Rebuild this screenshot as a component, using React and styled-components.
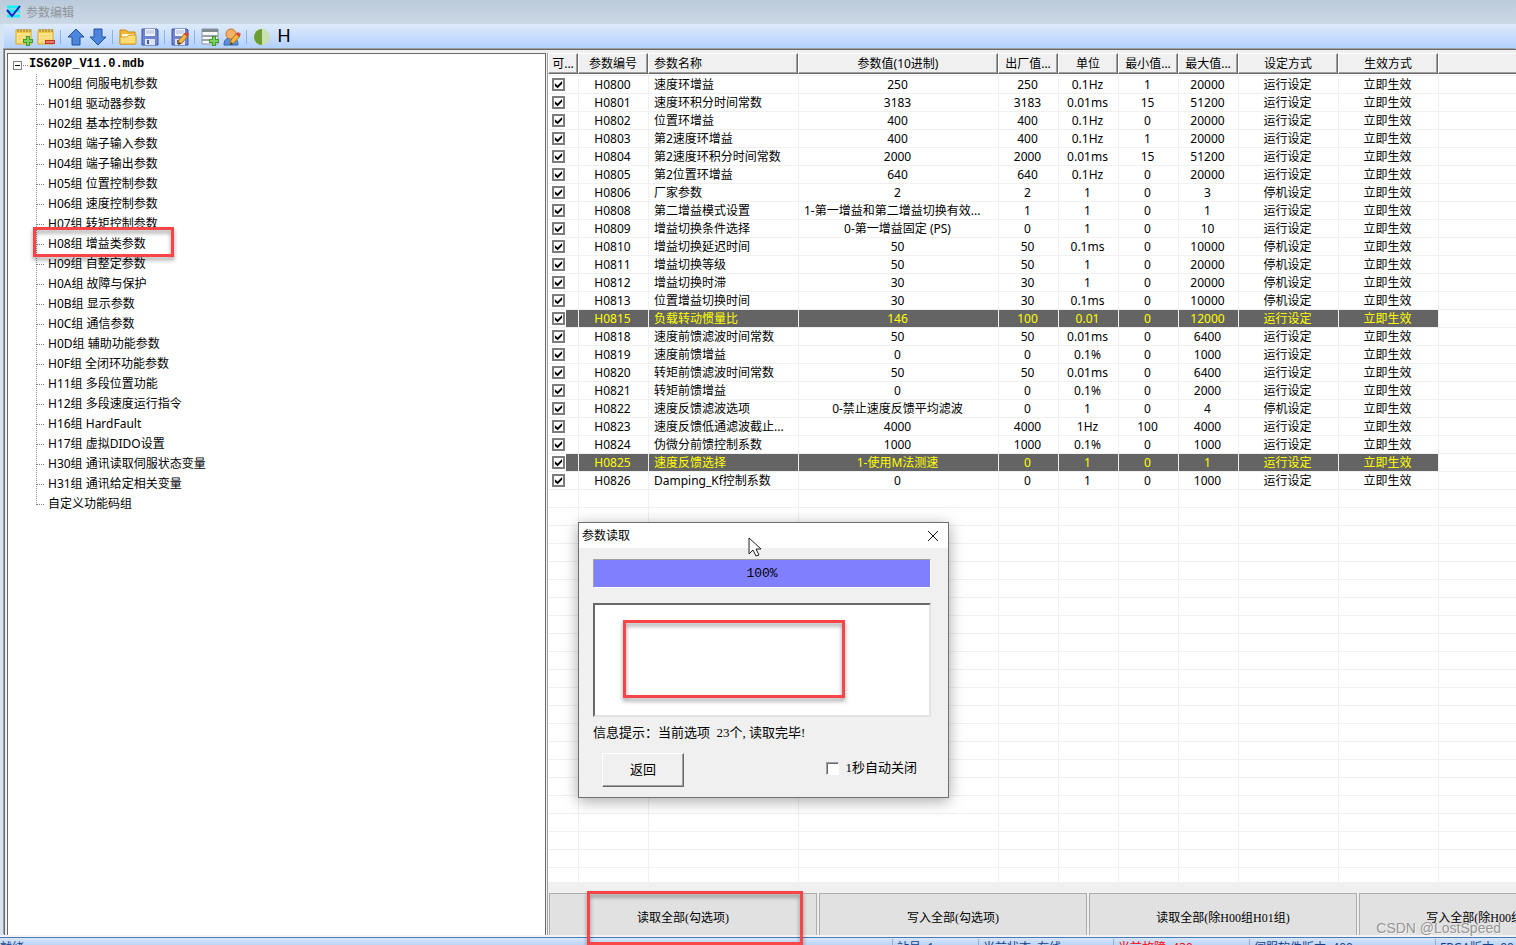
import React, { useState } from 'react'
import styled, { createGlobalStyle } from 'styled-components'

const groups = [
  'H00组 伺服电机参数',
  'H01组 驱动器参数',
  'H02组 基本控制参数',
  'H03组 端子输入参数',
  'H04组 端子输出参数',
  'H05组 位置控制参数',
  'H06组 速度控制参数',
  'H07组 转矩控制参数',
  'H08组 增益类参数',
  'H09组 自整定参数',
  'H0A组 故障与保护',
  'H0B组 显示参数',
  'H0C组 通信参数',
  'H0D组 辅助功能参数',
  'H0F组 全闭环功能参数',
  'H11组 多段位置功能',
  'H12组 多段速度运行指令',
  'H16组 HardFault',
  'H17组 虚拟DIDO设置',
  'H30组 通讯读取伺服状态变量',
  'H31组 通讯给定相关变量',
  '自定义功能码组',
]

const columns = [
  { title: '可...', width: 30 },
  { title: '参数编号', width: 70 },
  { title: '参数名称', width: 150, left: true },
  { title: '参数值(10进制)', width: 200 },
  { title: '出厂值...', width: 60 },
  { title: '单位', width: 60 },
  { title: '最小值...', width: 60 },
  { title: '最大值...', width: 60 },
  { title: '设定方式', width: 100 },
  { title: '生效方式', width: 100 },
  { title: '' },
]

const RUN = '运行设定'
const STOP = '停机设定'

const params = [
  ['H0800', '速度环增益', '250', '250', '0.1Hz', '1', '20000', RUN],
  ['H0801', '速度环积分时间常数', '3183', '3183', '0.01ms', '15', '51200', RUN],
  ['H0802', '位置环增益', '400', '400', '0.1Hz', '0', '20000', RUN],
  ['H0803', '第2速度环增益', '400', '400', '0.1Hz', '1', '20000', RUN],
  ['H0804', '第2速度环积分时间常数', '2000', '2000', '0.01ms', '15', '51200', RUN],
  ['H0805', '第2位置环增益', '640', '640', '0.1Hz', '0', '20000', RUN],
  ['H0806', '厂家参数', '2', '2', '1', '0', '3', STOP],
  ['H0808', '第二增益模式设置', '1-第一增益和第二增益切换有效...', '1', '1', '0', '1', RUN],
  ['H0809', '增益切换条件选择', '0-第一增益固定 (PS)', '0', '1', '0', '10', RUN],
  ['H0810', '增益切换延迟时间', '50', '50', '0.1ms', '0', '10000', STOP],
  ['H0811', '增益切换等级', '50', '50', '1', '0', '20000', STOP],
  ['H0812', '增益切换时滞', '30', '30', '1', '0', '20000', STOP],
  ['H0813', '位置增益切换时间', '30', '30', '0.1ms', '0', '10000', STOP],
  ['H0815', '负载转动惯量比', '146', '100', '0.01', '0', '12000', RUN],
  ['H0818', '速度前馈滤波时间常数', '50', '50', '0.01ms', '0', '6400', RUN],
  ['H0819', '速度前馈增益', '0', '0', '0.1%', '0', '1000', RUN],
  ['H0820', '转矩前馈滤波时间常数', '50', '50', '0.01ms', '0', '6400', RUN],
  ['H0821', '转矩前馈增益', '0', '0', '0.1%', '0', '2000', RUN],
  ['H0822', '速度反馈滤波选项', '0-禁止速度反馈平均滤波', '0', '1', '0', '4', STOP],
  ['H0823', '速度反馈低通滤波截止...', '4000', '4000', '1Hz', '100', '4000', RUN],
  ['H0824', '伪微分前馈控制系数', '1000', '1000', '0.1%', '0', '1000', RUN],
  ['H0825', '速度反馈选择', '1-使用M法测速', '0', '1', '0', '1', RUN],
  ['H0826', 'Damping_Kf控制系数', '0', '0', '1', '0', '1000', RUN],
]

const changed = ['H0815', 'H0825']
const blankRows = Array.from({ length: 22 })

const actions = ['读取全部(勾选项)', '写入全部(勾选项)', '读取全部(除H00组H01组)', '写入全部(除H00组H01组)']

const NotePad = () => (
  <>
    <rect x="1" y="2" width="15" height="14" fill="#fbe48a" stroke="#d9a520" />
    <path d="M1 2h15v3H1z" fill="#f3c844" />
    <path d="M3 1v3M6 1v3M9 1v3M12 1v3M15 1v3" stroke="#8a7440" />
    <path d="M3 8h11M3 11h11M3 14h7" stroke="#f0cf62" />
  </>
)

const Disk = () => (
  <>
    <path d="M1 1h15l1 1v15H1z" fill="#6f83cf" stroke="#4355a4" />
    <path d="M4 1h10v7H4z" fill="#eef3fc" />
    <path d="M5 3h8M5 5h8" stroke="#a9b7dd" />
    <path d="M4 11h10v6H4z" fill="#dce3f4" />
    <path d="M6 12h2v4H6z" fill="#4a5ca8" />
  </>
)

const Pencil = () => (
  <>
    <path d="M7 16l1-4 6-7 3 3-6 7z" fill="#f4b73c" stroke="#a8701c" />
    <path d="M13 6l2-2 3 2-2 3z" fill="#d9463c" />
    <path d="M7 17l1-3 2 2z" fill="#433a2c" />
  </>
)

const tools = [
  {
    name: '新建',
    art: <><NotePad /><path d="M13 8v10M8 13h10" stroke="#3f9b2f" strokeWidth="4" /><path d="M13 9v8M9 13h8" stroke="#7bd35d" strokeWidth="2" /></>,
  },
  {
    name: '删除',
    art: <><NotePad /><path d="M8 14h10" stroke="#b93a2c" strokeWidth="4" /><path d="M9 14h8" stroke="#ee7a66" strokeWidth="2" /></>,
    split: true,
  },
  { name: '上移', art: <path d="M9 1l8 8h-4v8H5V9H1z" fill="#4b86dc" stroke="#2450a0" /> },
  { name: '下移', art: <path d="M9 17l8-8h-4V1H5v8H1z" fill="#4b86dc" stroke="#2450a0" />, split: true },
  {
    name: '打开',
    art: <><path d="M1 16V2h6l2 2h7v12z" fill="#f2b632" stroke="#c98b14" /><path d="M3 6h12v4H3z" fill="#fff9e0" /><path d="M1 16V9h7l2-2h7v9z" fill="#fddc72" stroke="#d79c20" /></>,
  },
  { name: '保存', art: <Disk />, split: true },
  { name: '另存为', art: <><Disk /><Pencil /></>, split: true },
  {
    name: '添加表',
    art: <><path d="M1 1h16v15H1z" fill="#f5f7f8" stroke="#8d979b" /><path d="M1 1h16v3H1z" fill="#7f8b90" /><path d="M1 8h16M1 12h16" stroke="#9aa4a8" strokeWidth="2" /><path d="M13 8v10M8 13h10" stroke="#3f9b2f" strokeWidth="4" /><path d="M13 9v8M9 13h8" stroke="#7bd35d" strokeWidth="2" /></>,
  },
  {
    name: '用户',
    art: <><path d="M1 17c0-5 2-7 7-7s7 2 7 7z" fill="#5c8fdc" stroke="#3264b0" /><circle cx="8" cy="6" r="5" fill="#f5b06a" stroke="#c87527" /><Pencil /></>,
    split: true,
  },
  {
    name: '对比度',
    art: <><circle cx="9" cy="9" r="8" fill="#c9dfb0" /><path d="M9 1a8 8 0 0 0 0 16z" fill="#6d9c30" /></>,
  },
]

function App() {
  const [autoClose, setAutoClose] = useState(false)
  return (
    <Window>
      <GlobalStyle />
      <TitleBar>
        <svg width="16" height="14" viewBox="0 0 16 14">
          <path d="M1 2h13M1 6h13M1 11h13" stroke="#19f0f5" strokeWidth="3" />
          <path d="M1 5l5 6L14 1" fill="none" stroke="#1022c8" strokeWidth="2" />
        </svg>
        参数编辑
      </TitleBar>
      <ToolBar>
        {tools.map(tool => (
          <React.Fragment key={tool.name}>
            <ToolButton aria-label={tool.name}>
              <svg width="18" height="18" viewBox="0 0 18 18">{tool.art}</svg>
            </ToolButton>
            {tool.split && <Separator />}
          </React.Fragment>
        ))}
        <ToolButton>H</ToolButton>
      </ToolBar>

      <Main>
        <Tree>
          <Root>
            <Expander aria-label="折叠" />
            <Stub />
            IS620P_V11.0.mdb
          </Root>
          <Branches>
            {groups.map(group => (
              <Branch key={group}>
                {group}
                {group.startsWith('H08') && <TreeMark />}
              </Branch>
            ))}
          </Branches>
        </Tree>

        <Content>
          <Grid>
            <Table>
              <colgroup>
                {columns.map((col, i) => <Col key={i} $width={col.width} />)}
              </colgroup>
              <thead>
                <tr>
                  {columns.map((col, i) => (
                    <Head key={i}><HeadLabel $left={col.left}>{col.title}</HeadLabel></Head>
                  ))}
                </tr>
              </thead>
              <tbody>
                {params.map(row => (
                  <Row key={row[0]} $changed={changed.includes(row[0])}>
                    <CheckCell $changed={changed.includes(row[0])}>
                      <RowCheck type="checkbox" defaultChecked aria-label={row[0]} />
                    </CheckCell>
                    {row.map((text, i) => (
                      <Cell key={i} $left={i === 1 || text.endsWith('...')}>{text}</Cell>
                    ))}
                    <Cell>立即生效</Cell>
                    <LastCell />
                  </Row>
                ))}
                {blankRows.map((_, i) => (
                  <Row key={i}>
                    {columns.map((col, c) => <Cell key={c} $first={c === 0} />)}
                  </Row>
                ))}
              </tbody>
            </Table>
          </Grid>
          <Actions>
            {actions.map(action => <ActionButton key={action}>{action}</ActionButton>)}
          </Actions>

          <Dialog role="dialog" aria-labelledby="dialog-title">
            <DialogTitle>
              <span id="dialog-title">参数读取</span>
              <CloseButton aria-label="关闭">
                <svg width="12" height="12" viewBox="0 0 12 12">
                  <path d="M1 1l10 10M11 1L1 11" stroke="#111" fill="none" />
                </svg>
              </CloseButton>
            </DialogTitle>
            <DialogBody>
              <Progress>100%</Progress>
              <Log><LogMark /></Log>
              <Info>信息提示：当前选项&nbsp; 23个, 读取完毕!</Info>
              <DialogFooter>
                <BackButton>返回</BackButton>
                <AutoClose>
                  <CloseCheck type="checkbox" checked={autoClose} onChange={e => setAutoClose(e.target.checked)} />
                  1秒自动关闭
                </AutoClose>
              </DialogFooter>
            </DialogBody>
            <Pointer width="14" height="20" viewBox="0 0 14 20">
              <path d="M1 1v16l4-4 3 6 3-1-3-6h5z" fill="#fff" stroke="#1c1c28" />
            </Pointer>
          </Dialog>
        </Content>
      </Main>

      <StatusBar>
        <Status>就绪</Status>
        <Status $width={86}>站号: 1</Status>
        <Status $width={135}>当前状态: 在线</Status>
        <Status $width={136} $alarm>当前故障: 430</Status>
        <Status $width={186}>伺服软件版本: 400</Status>
        <Status $width={81}>FPGA版本: 00.0</Status>
      </StatusBar>
      <ActionMark />
      <Watermark>CSDN @LostSpeed</Watermark>
    </Window>
  )
}

export default App

const GlobalStyle = createGlobalStyle`
  * {
    box-sizing: border-box;
  }

  body {
    margin: 0;
    font-family: "Noto Sans", "Noto Sans CJK SC", sans-serif;
    font-size: 12px;
    color: #000;
  }

  button {
    padding: 0;
    border: 0;
    background: none;
    color: inherit;
    font: inherit;
  }
`

const serif = '"Liberation Serif", "Noto Sans CJK SC", serif'

const Window = styled.div`
  position: relative;
  display: flex;
  flex-direction: column;
  height: 100vh;
  overflow: hidden;
  background: #d6e3f2;
`

const TitleBar = styled.header`
  display: flex;
  align-items: center;
  gap: 4px;
  flex: none;
  height: 24px;
  padding-left: 6px;
  background: linear-gradient(#bccbdb, #cbd8e6);
  color: #8f959c;
`

const ToolBar = styled.div`
  display: flex;
  align-items: center;
  flex: none;
  height: 25px;
  margin-left: 4px;
  padding-left: 9px;
  background: linear-gradient(#dfebfb, #b0d0ff);
`

const ToolButton = styled.button`
  display: flex;
  align-items: center;
  justify-content: center;
  width: 22px;
  height: 22px;
  font: 18px "Liberation Sans", sans-serif;
`

const Separator = styled.span`
  width: 1px;
  height: 14px;
  margin: 0 4px 0 3px;
  background: #8fb0e0;
`

const Main = styled.main`
  display: flex;
  flex: 1;
  min-height: 0;
  margin-left: 4px;
  padding: 3px 0 0 2px;
  border: solid #696969;
  border-width: 1px 0 0 1px;
  box-shadow: -1px -1px #a0a0a0;
  background: #f0f0f0;
`

const Tree = styled.nav`
  flex: none;
  width: 539px;
  margin-right: 1px;
  border: 1px solid #696969;
  border-bottom: 0;
  background: #fff;
`

const Root = styled.div`
  display: flex;
  align-items: center;
  height: 19px;
  padding-left: 5px;
  font: bold 12px "Liberation Mono", monospace;
  white-space: nowrap;
`

const Expander = styled.button`
  width: 9px;
  height: 9px;
  margin-top: 4px;
  border: 1px solid #808080;
  background: linear-gradient(#000, #000) center / 5px 1px no-repeat #fff;
`

const Stub = styled.span`
  width: 5px;
  margin: 4px 1px 0;
  border-top: 1px dotted #808080;
`

const Branches = styled.ul`
  margin: 1px 0 0 28px;
  padding: 0;
  list-style: none;
`

const Branch = styled.li`
  position: relative;
  display: flex;
  align-items: center;
  gap: 4px;
  height: 20px;
  line-height: 20px;
  background: repeating-linear-gradient(#909090 0 1px, #fff 1px 2px) left / 1px 100% no-repeat;

  &::before {
    content: '';
    width: 8px;
    border-top: 1px dotted #808080;
  }

  &:last-child {
    background-size: 1px 50%;
    background-position: top left;
  }
`

const Mark = styled.span`
  position: absolute;
  z-index: 2;
  border: 3px solid #fa4548;
  filter: drop-shadow(0 3px 2px rgba(0, 0, 0, 0.4));
  pointer-events: none;
`

const TreeMark = styled(Mark)`
  left: -3px;
  top: -7px;
  width: 141px;
  height: 30px;
`

const LogMark = styled(Mark)`
  left: 28px;
  top: 15px;
  width: 222px;
  height: 78px;
`

const ActionMark = styled(Mark)`
  left: 587px;
  bottom: 0;
  width: 216px;
  height: 54px;
`

const Content = styled.section`
  position: relative;
  display: flex;
  flex-direction: column;
  flex: 1;
  min-width: 0;
  border-left: 1px solid #a0a0a0;
`

const Grid = styled.div`
  flex: 1;
  min-height: 0;
  overflow: hidden;
  background: #fff;
`

const Table = styled.table`
  width: calc(100% + 2px);
  table-layout: fixed;
  border-spacing: 0;
`

const Col = styled.col`
  width: ${props => props.$width ? `${props.$width}px` : 'auto'};
`

const Head = styled.th`
  padding: 0 0 1px;
  border-bottom: 1px solid #f0f0f0;
  font-weight: normal;
`

const HeadLabel = styled.span`
  display: block;
  height: 21px;
  padding: ${props => props.$left ? '0 5px' : '0'};
  border: 1px solid;
  border-color: #fff #696969 #696969 #fff;
  box-shadow: inset -1px -1px #a0a0a0;
  background: #f0f0f0;
  line-height: 20px;
  text-align: ${props => props.$left ? 'left' : 'center'};
  white-space: nowrap;
`

const Row = styled.tr`
  background: ${props => props.$changed ? '#646464' : '#fff'};
  color: ${props => props.$changed ? '#ff0' : '#000'};
`

const Cell = styled.td`
  height: 18px;
  padding: ${props => props.$left ? '0 5px' : '0 2px 0 0'};
  border-bottom: 1px solid #f0f0f0;
  border-left: ${props => props.$first ? '0' : '1px solid #f0f0f0'};
  line-height: 17px;
  text-align: ${props => props.$left ? 'left' : 'center'};
  white-space: nowrap;
  overflow: hidden;
`

const LastCell = styled(Cell)`
  background: #fff;
`

const CheckCell = styled.td`
  height: 18px;
  padding: 0 0 0 4px;
  border-bottom: 1px solid #f0f0f0;
  background: linear-gradient(90deg, #fff 18px, ${props => props.$changed ? '#646464' : '#fff'} 18px);
  line-height: 0;
`

const RowCheck = styled.input`
  appearance: none;
  width: 13px;
  height: 13px;
  margin: 0;
  border: 2px solid #7c7c7c;
  background: #fff;
  vertical-align: middle;

  &:checked::before {
    content: '';
    display: block;
    width: 9px;
    height: 9px;
    background: #000;
    clip-path: polygon(10% 35%, 40% 60%, 90% 10%, 90% 42%, 40% 92%, 10% 67%);
  }
`

const Actions = styled.div`
  display: flex;
  gap: 2px;
  flex: none;
  height: 53px;
  padding: 11px 0 0 1px;
  overflow: hidden;
`

const ActionButton = styled.button`
  flex: 0 0 268px;
  height: 48px;
  border: 1px solid #adadad;
  background: #e1e1e1;
  font-family: ${serif};
`

const Dialog = styled.div`
  position: absolute;
  left: 30px;
  top: 469px;
  width: 371px;
  border: 1px solid #707070;
  background: #f0f0f0;
  box-shadow: 0 3px 14px rgba(0, 0, 0, 0.35);
`

const DialogTitle = styled.div`
  display: flex;
  align-items: center;
  justify-content: space-between;
  height: 25px;
  padding: 0 9px 0 3px;
  background: #fff;
  line-height: 24px;
`

const CloseButton = styled.button`
  display: flex;
`

const DialogBody = styled.div`
  padding: 11px 17px 10px 14px;
  font-family: ${serif};
  font-size: 13px;
`

const Progress = styled.div`
  height: 29px;
  border: 1px solid;
  border-color: #a0a0a0 #fff #fff #a0a0a0;
  background: #8080ff;
  font: 13px "Liberation Mono", monospace;
  line-height: 28px;
  text-align: center;
`

const Log = styled.div`
  position: relative;
  height: 114px;
  margin-top: 15px;
  border: 2px solid;
  border-color: #696969 #e3e3e3 #e3e3e3 #696969;
  background: #fff;
`

const Info = styled.p`
  margin: 6px 0 0;
  line-height: 20px;
`

const DialogFooter = styled.div`
  display: flex;
  align-items: center;
  justify-content: space-between;
  margin-top: 10px;
  padding: 0 14px 0 9px;
`

const BackButton = styled.button`
  width: 82px;
  height: 34px;
  padding-bottom: 4px;
  border: 1px solid;
  border-color: #fff #696969 #696969 #fff;
  box-shadow: inset -1px -1px #a0a0a0;
`

const AutoClose = styled.label`
  display: flex;
  align-items: center;
  gap: 6px;
  margin-bottom: 4px;
  line-height: 20px;
`

const CloseCheck = styled.input`
  appearance: none;
  width: 13px;
  height: 13px;
  margin: 0;
  border: 1px solid;
  border-color: #a0a0a0 #fff #fff #a0a0a0;
  box-shadow: inset 1px 1px #696969;
  background: #fff;

  &:checked {
    background: #444;
  }
`

const Pointer = styled.svg`
  position: absolute;
  left: 169px;
  top: 14px;
`

const StatusBar = styled.footer`
  display: flex;
  flex: none;
  height: 10px;
  overflow: hidden;
  border-top: 2px solid #f4f4f4;
  box-shadow: inset 0 1px #4a7ab5;
  background: linear-gradient(#dce9fb, #bcd4f6);
`

const Status = styled.span`
  flex: ${props => props.$width ? `0 0 ${props.$width}px` : '1'};
  min-width: 0;
  height: 20px;
  margin-top: 2px;
  padding-left: ${props => props.$width ? '4px' : '0'};
  border-left: ${props => props.$width ? '1px solid #8fb0dd' : '0'};
  color: ${props => props.$alarm ? '#f00' : '#15428b'};
  line-height: 18px;
  white-space: nowrap;
`

const Watermark = styled.div`
  position: absolute;
  right: 15px;
  bottom: 9px;
  color: #969696;
  font: 14px "Liberation Sans", sans-serif;
  text-shadow: 1px 1px #f5f5f5;
`
